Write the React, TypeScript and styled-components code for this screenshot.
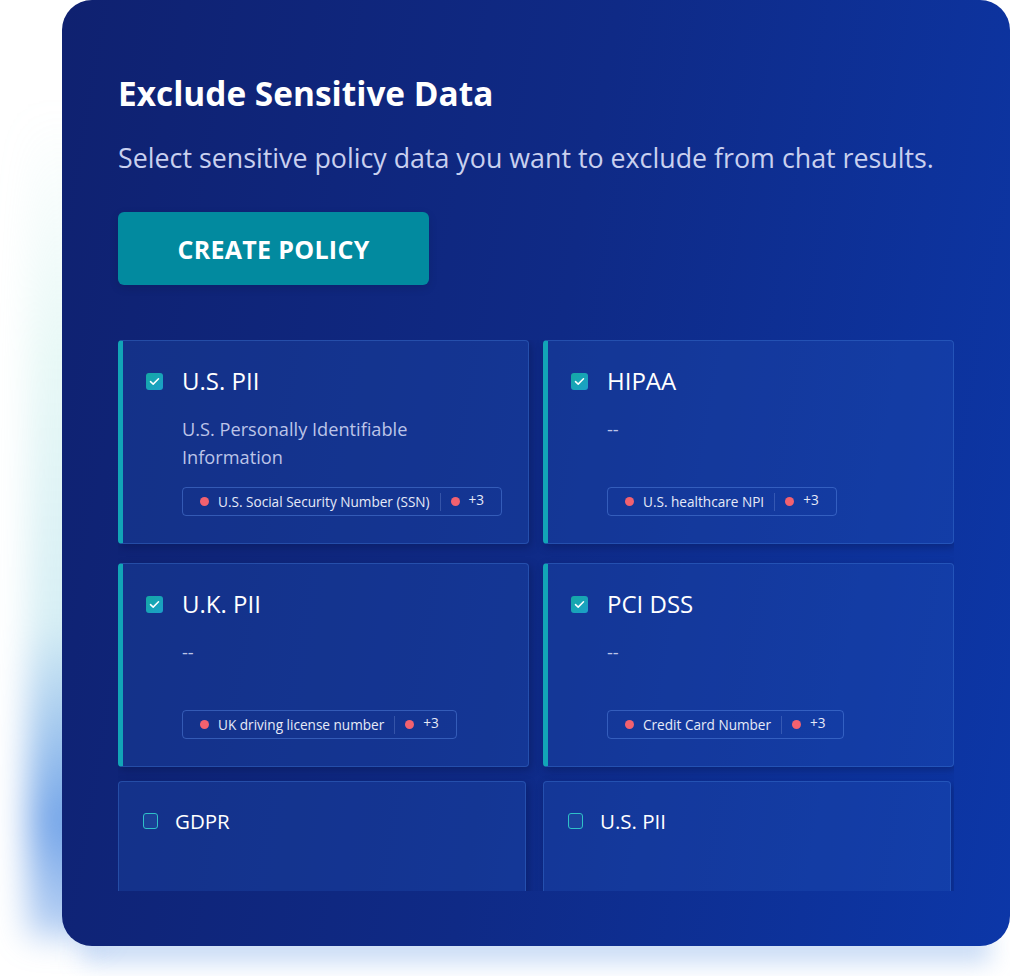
import React from 'react';
import styled, { createGlobalStyle } from 'styled-components';

const GlobalStyle = createGlobalStyle`
  html {
    background: #ffffff;
  }
  html, body {
    margin: 0;
    padding: 0;
  }
  body {
    font-family: "Open Sans", "Noto Sans", Arial, sans-serif;
    -webkit-font-smoothing: antialiased;
  }
`;

type Policy = {
  name: string;
  description: string;
  tag?: string;
  checked: boolean;
};

const policies: Policy[] = [
  {
    name: 'U.S. PII',
    description: 'U.S. Personally Identifiable Information',
    tag: 'U.S. Social Security Number (SSN)',
    checked: true
  },
  { name: 'HIPAA', description: '--', tag: 'U.S. healthcare NPI', checked: true },
  { name: 'U.K. PII', description: '--', tag: 'UK driving license number', checked: true },
  { name: 'PCI DSS', description: '--', tag: 'Credit Card Number', checked: true },
  { name: 'GDPR', description: '', checked: false },
  { name: 'U.S. PII', description: '', checked: false }
];

const CheckIcon = () => (
  <svg width="11" height="9" viewBox="0 0 11 9" fill="none">
    <path d="M1.5 4.6 L4.2 7.1 L9.5 1.8" stroke="#ffffff" strokeWidth="1.5" strokeLinecap="round" strokeLinejoin="round" />
  </svg>
);

const App = () => {
  return (
    <>
      <GlobalStyle />
      <Stage>
        <Panel>
          <Title>Exclude Sensitive Data</Title>
          <Subtitle>Select sensitive policy data you want to exclude from chat results.</Subtitle>
          <CreateButton type="button">CREATE POLICY</CreateButton>
          <ScrollArea>
            <CardGrid>
              {policies.map((p, i) => (
                <Card key={i} checked={p.checked}>
                  <CardHead checked={p.checked}>
                    <Box checked={p.checked}>{p.checked && <CheckIcon />}</Box>
                    <CardTitle checked={p.checked}>{p.name}</CardTitle>
                  </CardHead>
                  {p.description && <Description>{p.description}</Description>}
                  {p.tag && (
                    <Chip>
                      <Dot />
                      <ChipText>{p.tag}</ChipText>
                      <ChipDivider />
                      <Dot />
                      <ChipMore>+3</ChipMore>
                    </Chip>
                  )}
                </Card>
              ))}
            </CardGrid>
          </ScrollArea>
        </Panel>
      </Stage>
    </>
  );
};

const Stage = styled.div`
  width: 1010px;
  height: 976px;
  padding-left: 62px;
  box-sizing: border-box;
  overflow: hidden;
  position: relative;
`;

const Panel = styled.div`
  position: relative;
  width: 948px;
  height: 946px;
  box-sizing: border-box;
  padding: 72px 56px 56px 56px;
  border-radius: 30px;
  background: linear-gradient(100deg, #0f2170 0%, #0f2a86 50%, #0c37a8 100%);
  display: flex;
  flex-direction: column;

  /* soft glow that leaks out on the left and bottom, painted behind the panel */
  &::before {
    content: '';
    position: absolute;
    left: -34px;
    top: 110px;
    bottom: 8px;
    width: 70px;
    background: linear-gradient(
      180deg,
      rgba(150, 225, 215, 0) 0%,
      rgba(150, 225, 215, 0.22) 30%,
      rgba(120, 200, 220, 0.3) 62%,
      rgba(70, 135, 225, 0.75) 86%,
      rgba(70, 135, 225, 0.35) 100%
    );
    filter: blur(16px);
    z-index: -1;
  }

  &::after {
    content: '';
    position: absolute;
    left: 20px;
    right: 20px;
    bottom: -16px;
    height: 30px;
    background: rgba(90, 145, 225, 0.35);
    filter: blur(12px);
    z-index: -1;
  }
`;

const Title = styled.h1`
  margin: 0;
  font-size: 33.4px;
  line-height: 42px;
  font-weight: 700;
  color: #ffffff;
`;

const Subtitle = styled.p`
  margin: 26px 0 0 0;
  font-size: 26.8px;
  line-height: 36px;
  font-weight: 400;
  color: #c9d0ef;
  white-space: nowrap;
`;

const CreateButton = styled.button`
  margin-top: 36px;
  width: 311px;
  height: 73px;
  flex: none;
  border: none;
  border-radius: 6px;
  background: #028a9f;
  color: #ffffff;
  font-family: "Open Sans", "Noto Sans", Arial, sans-serif;
  font-size: 25px;
  font-weight: 700;
  letter-spacing: 0.3px;
  box-shadow: 0 3px 10px rgba(0, 0, 0, 0.12);
  cursor: pointer;
`;

const ScrollArea = styled.div`
  margin-top: 55px;
  height: 551px;
  flex: none;
  overflow: hidden;
`;

const CardGrid = styled.div`
  display: grid;
  grid-template-columns: 411px 411px;
  column-gap: 14px;
  grid-auto-rows: 204px;
  row-gap: 19px;
`;

const Card = styled.div<{ checked: boolean }>`
  position: relative;
  box-sizing: border-box;
  display: flex;
  flex-direction: column;
  padding: ${p => (p.checked ? '25px 26px 27px 23px' : '24px 26px 27px 24px')};
  border: 1px solid rgba(70, 130, 220, 0.35);
  border-left: ${p => (p.checked ? '5px solid #12a5b7' : '1px solid rgba(70, 130, 220, 0.35)')};
  border-radius: 4px;
  background: rgba(35, 85, 185, 0.28);
  box-shadow: 2px 3px 8px rgba(5, 15, 60, 0.35);
  ${p => !p.checked && 'margin-top: -5px; width: 408px;'}
`;

const CardHead = styled.div<{ checked: boolean }>`
  display: flex;
  align-items: center;
  gap: ${p => (p.checked ? '19px' : '17px')};
`;

const Box = styled.span<{ checked: boolean }>`
  flex: none;
  display: inline-flex;
  align-items: center;
  justify-content: center;
  box-sizing: border-box;
  width: ${p => (p.checked ? '17px' : '15px')};
  height: ${p => (p.checked ? '17px' : '16px')};
  border-radius: 3px;
  background: ${p => (p.checked ? 'linear-gradient(135deg, #14a9a4 0%, #1c9fca 100%)' : 'rgba(30, 75, 160, 0.6)')};
  border: ${p => (p.checked ? 'none' : '1.5px solid #2fc0c8')};
`;

const CardTitle = styled.span<{ checked: boolean }>`
  font-size: ${p => (p.checked ? '24px' : '20.5px')};
  line-height: 30px;
  font-weight: 500;
  color: #ffffff;
`;

const Description = styled.div`
  margin-top: 19px;
  margin-left: 36px;
  max-width: 300px;
  font-size: 18.2px;
  line-height: 28px;
  color: #bcc4e8;
`;

const Chip = styled.div`
  margin-top: auto;
  margin-left: 36px;
  align-self: flex-start;
  height: 29px;
  box-sizing: border-box;
  display: flex;
  align-items: center;
  padding: 0 17px;
  border: 1px solid rgba(90, 140, 230, 0.45);
  border-radius: 4px;
`;

const Dot = styled.span`
  width: 9px;
  height: 9px;
  border-radius: 50%;
  background: #f2616f;
  flex: none;
`;

const ChipText = styled.span`
  margin-left: 9px;
  font-size: 13.6px;
  line-height: 18px;
  color: #e6eaf8;
  white-space: nowrap;
`;

const ChipDivider = styled.span`
  width: 1px;
  height: 18px;
  margin: 0 10px;
  background: rgba(150, 180, 240, 0.25);
`;

const ChipMore = styled.span`
  margin-left: 9px;
  margin-top: -3px;
  font-size: 13.6px;
  line-height: 18px;
  color: #e6eaf8;
`;

export default App;
